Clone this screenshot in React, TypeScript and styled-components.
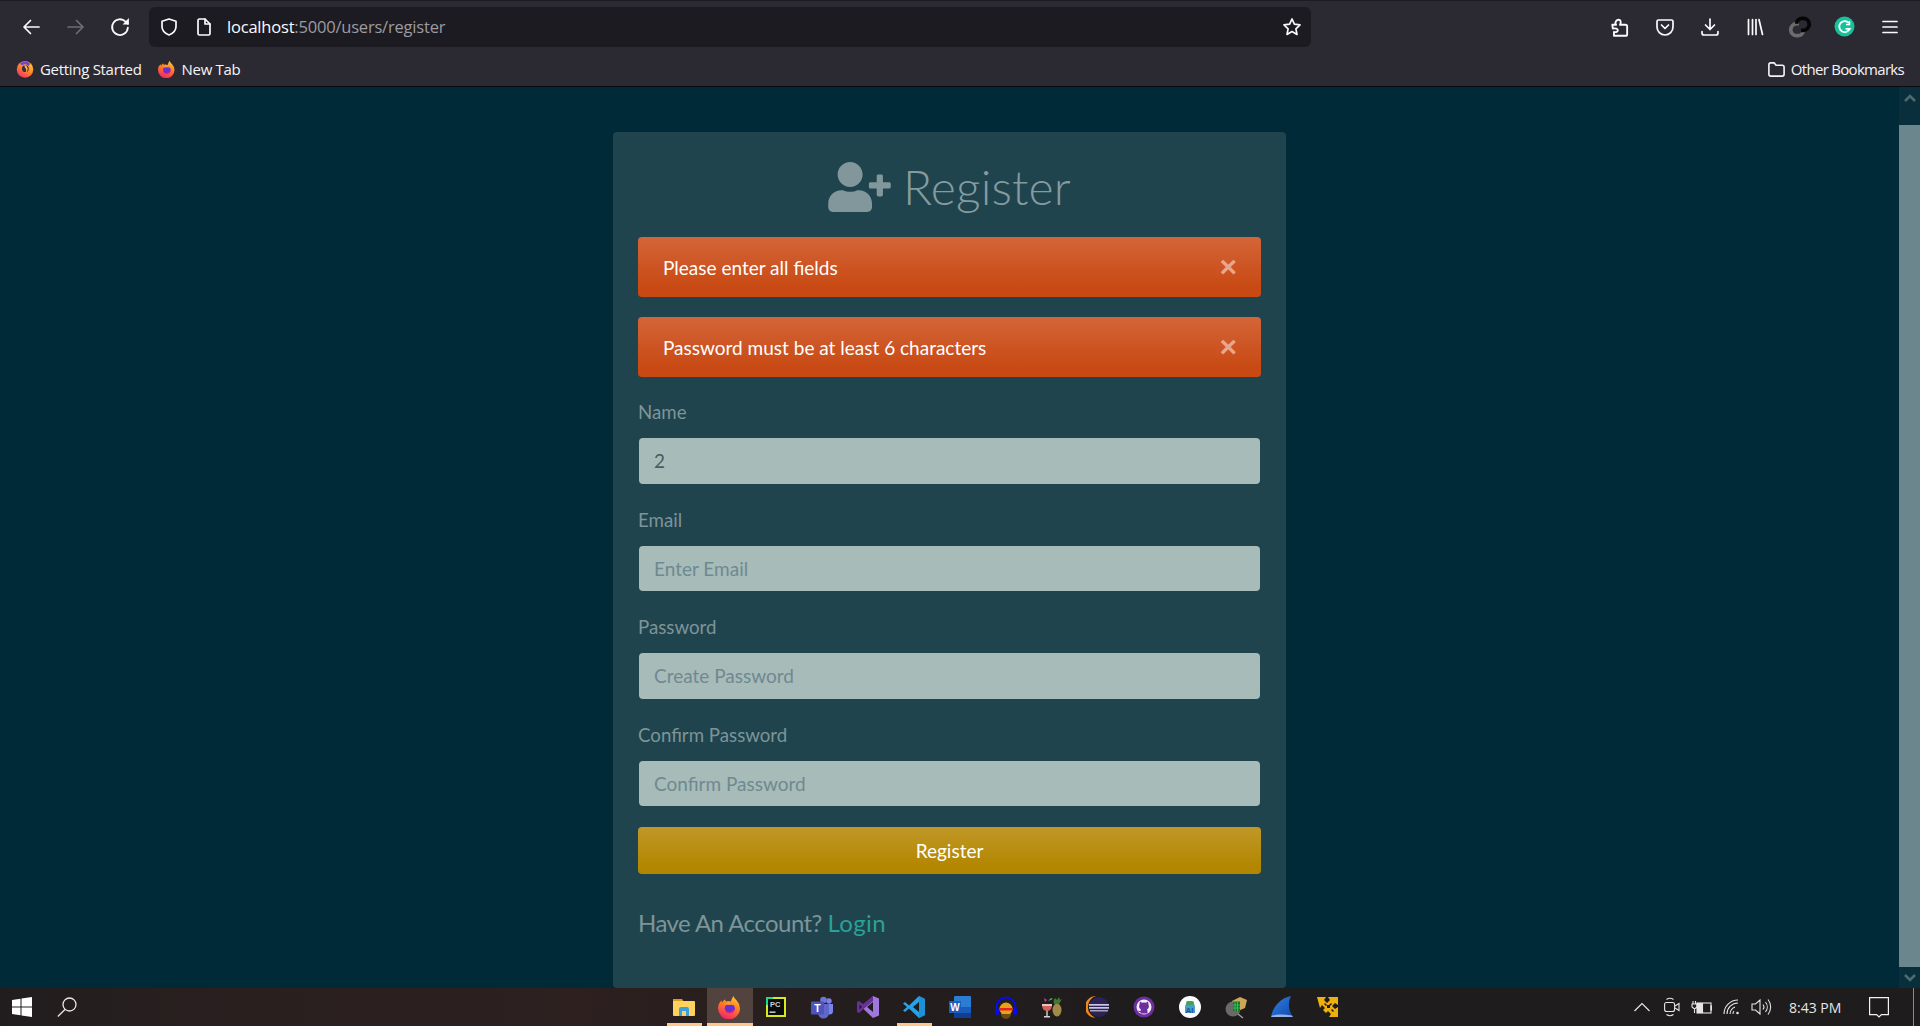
import React from "react";
import styled, { createGlobalStyle } from "styled-components";
import { FaUserPlus } from "react-icons/fa";

const GlobalStyle = createGlobalStyle`
  html, body {
    margin: 0;
    padding: 0;
    height: 100%;
    overflow: hidden;
    background: #002a38;
  }
  * {
    box-sizing: border-box;
  }
`;

const Screen = styled.div`
  display: flex;
  flex-direction: column;
  width: 1920px;
  height: 1026px;
  overflow: hidden;
`;

const BrowserChrome = styled.header`
  height: 87px;
  flex: none;
  display: flex;
  flex-direction: column;
  background: #2b2a33;
  border-top: 1px solid #1d1c22;
  border-bottom: 1px solid #0c0c0f;
  font-family: "Open Sans", sans-serif;
`;

const Toolbar = styled.div`
  height: 51px;
  flex: none;
  display: flex;
  align-items: center;
  padding: 0 8px;
`;

const ToolButton = styled.div<{ $dim?: boolean }>`
  width: 45px;
  height: 40px;
  flex: none;
  display: flex;
  align-items: center;
  justify-content: center;
  color: ${(p) => (p.$dim ? "#6d6c72" : "#fbfbfe")};
`;

const AddressBar = styled.div`
  width: 1162px;
  height: 40px;
  margin-left: 6px;
  flex: none;
  display: flex;
  align-items: center;
  padding: 0 8px 0 10px;
  gap: 15px;
  background: #1c1b22;
  border-radius: 6px;
  color: #fbfbfe;
`;

const Url = styled.div`
  font-size: 16.5px;
  letter-spacing: -0.2px;
  color: #fbfbfe;
  margin-left: -2px;

  span {
    color: #9c9ba1;
  }
`;

const Star = styled.div`
  margin-left: auto;
  display: flex;
  margin-right: 1px;
`;

const ToolGroup = styled.div`
  margin-left: auto;
  display: flex;
`;

const BookmarkBar = styled.div`
  flex: 1;
  display: flex;
  align-items: center;
  padding: 0 16px 0 16px;
  color: #f4f4f6;
  font-size: 15px;
  letter-spacing: -0.3px;
`;

const Bookmark = styled.div<{ $end?: boolean }>`
  display: flex;
  align-items: center;
  gap: 6px;
  margin-right: 16px;
  ${(p) => p.$end && "margin-left: auto; margin-right: 0; gap: 5px; letter-spacing: -0.7px;"}
`;

const PageArea = styled.div`
  flex: 1;
  min-height: 0;
  display: flex;
  background: #002a38;
`;

const Main = styled.main`
  flex: 1;
  display: flex;
  justify-content: center;
  padding-top: 45px;
  font-family: Lato, sans-serif;
`;

const Card = styled.section`
  width: 673px;
  height: 856px;
  padding: 25px 25px 0;
  background: #1f444e;
  border-radius: 4px;
`;

const Heading = styled.h1`
  margin: 0 0 16px;
  height: 64px;
  padding-bottom: 6px;
  display: flex;
  align-items: center;
  justify-content: center;
  gap: 12px;
  font-size: 48px;
  font-weight: 300;
  letter-spacing: 0.15px;
  color: #869b9f;

  svg {
    width: 63px;
    height: 50px;
    margin-top: 2px;
    color: #81979b;
  }
`;

const Alert = styled.div`
  height: 60px;
  margin-bottom: 20px;
  padding: 0 25px;
  display: flex;
  align-items: center;
  justify-content: space-between;
  color: #fff;
  font-size: 19px;
  border-radius: 4px;
  background: linear-gradient(180deg, #d46538 0%, #c84913 85%);
`;

const CloseMark = styled.span`
  font-family: "Liberation Sans", sans-serif;
  font-size: 30px;
  font-weight: 700;
  line-height: 1;
  color: #e8a78c;
  margin-right: -1px;
`;

const RegisterForm = styled.form`
  padding-top: 1px;
`;

const FormGroup = styled.div<{ $last?: boolean }>`
  margin-bottom: ${(p) => (p.$last ? "20.6px" : "22px")};
`;

const Label = styled.label`
  display: block;
  height: 30px;
  line-height: 29px;
  margin-bottom: 10px;
  color: #7d9498;
  font-size: 18.7px;
`;

const Input = styled.input`
  display: block;
  width: 621px;
  height: 45.6px;
  margin: 0 1px;
  padding: 0 15px;
  border: 0;
  border-radius: 4px;
  outline: none;
  background: #a7bbb9;
  color: #4b5a63;
  font-family: Lato, sans-serif;
  font-size: 19px;

  &::placeholder {
    color: #6f8991;
    opacity: 1;
  }
`;

const SubmitButton = styled.button`
  display: block;
  width: 100%;
  height: 47px;
  border: 0;
  border-radius: 4px;
  background: linear-gradient(180deg, #c09827 0%, #b38600 85%);
  color: #fff;
  font-family: Lato, sans-serif;
  font-size: 19px;
`;

const AccountLine = styled.p`
  margin: 28px 0 0;
  line-height: 42px;
  font-size: 24px;
  letter-spacing: -0.55px;
  color: #7d9498;

  a {
    color: #2aa198;
    text-decoration: none;
    letter-spacing: 0.4px;
  }
`;

const Scrollbar = styled.aside`
  width: 21px;
  flex: none;
  display: flex;
  flex-direction: column;
  background: #0a2f3c;
`;

const ScrollArrow = styled.div`
  height: 21px;
  flex: none;
  display: flex;
  align-items: center;
  justify-content: center;
  color: #506a72;
`;

const ScrollThumb = styled.div`
  flex: 1;
  margin: 17px 0 0;
  background: #6c868d;
`;

const Taskbar = styled.footer`
  height: 38px;
  flex: none;
  display: flex;
  background: linear-gradient(90deg, #211d1e 0%, #2a1f1f 12%, #2d201f 30%, #241d1e 45%, #1f1c1d 60%, #1e1c1d 100%);
  color: #e4e4e4;
`;

const StartZone = styled.div`
  width: 661px;
  flex: none;
  display: flex;
  align-items: center;
  padding-left: 12px;
  gap: 25px;
`;

const AppCell = styled.div<{ $active?: boolean; $running?: boolean }>`
  position: relative;
  width: 46px;
  flex: none;
  display: flex;
  align-items: center;
  justify-content: center;
  padding-bottom: 1px;
  background: ${(p) => (p.$active ? "#52433f" : "transparent")};

  &::after {
    content: "";
    display: ${(p) => (p.$running ? "block" : "none")};
    position: absolute;
    bottom: 0;
    height: 3px;
    left: ${(p) => (p.$active ? "0" : "6px")};
    right: ${(p) => (p.$active ? "0" : "5px")};
    background: #ffc68e;
  }
`;

const Tray = styled.div`
  margin-left: auto;
  display: flex;
  align-items: center;
  color: #e6e6e6;
`;

const TrayIcon = styled.div<{ $width: number }>`
  width: ${(p) => p.$width}px;
  display: flex;
  justify-content: center;
`;

const Clock = styled.div`
  width: 94px;
  padding-left: 14px;
  font-family: "Open Sans", sans-serif;
  font-size: 14px;
  white-space: nowrap;
`;

const NotifyArea = styled.div`
  width: 45px;
  height: 38px;
  display: flex;
  align-items: center;
  border-right: 1px solid #8a8a8a;
  margin-right: 6px;
`;

type IconProps = { size?: number };

const Line = ({ children, w = 20, h = 20, vb = "0 0 20 20", sw = 1.7 }: { children: React.ReactNode; w?: number; h?: number; vb?: string; sw?: number }) => (
  <svg width={w} height={h} viewBox={vb} fill="none" stroke="currentColor" strokeWidth={sw} strokeLinecap="round" strokeLinejoin="round">
    {children}
  </svg>
);

const FirefoxIcon = ({ size = 18 }: IconProps) => (
  <svg width={size} height={size} viewBox="0 0 24 24">
    <defs>
      <linearGradient id="ffBody" x1="0.7" y1="0" x2="0.3" y2="1">
        <stop offset="0" stopColor="#ffc62e" />
        <stop offset="0.45" stopColor="#ff7a26" />
        <stop offset="1" stopColor="#f0206c" />
      </linearGradient>
    </defs>
    <path d="M15.5 1c.4 2 2 3 3.4 4.7A11 11 0 1 1 3.4 5.4c0 1 .3 1.7.8 2.2.5-1.4 1.7-2.700 3.200-3.100-.2.800 0 1.500.5 2 1.500-.8 3.500-.8 5 .100.600-1.800 1.200-3.800 2.600-5.600z" fill="url(#ffBody)" />
    <circle cx="11.800" cy="13.300" r="5" fill="#6b2fd0" />
    <path d="M7 9.500c2-2.500 7-2.500 9 1-2-1-4-1-5-.500z" fill="#ff9a2c" />
    <path d="M16.800 13.500a5 5 0 0 1-9.500 2c2 2 6.500 2.200 9.500-2z" fill="#e0218a" />
  </svg>
);

const GettingStartedIcon = ({ size = 18 }: IconProps) => (
  <svg width={size} height={size} viewBox="0 0 24 24">
    <defs>
      <linearGradient id="gsBody" x1="0.8" y1="0.2" x2="0.3" y2="1">
        <stop offset="0" stopColor="#ffbd2e" />
        <stop offset="0.5" stopColor="#ff7a2a" />
        <stop offset="1" stopColor="#f5316c" />
      </linearGradient>
    </defs>
    <circle cx="12" cy="12.500" r="11" fill="url(#gsBody)" />
    <path d="M5 5a10 10 0 0 1 14 0l-2 3a7 7 0 0 0-9-1z" fill="#7b3fd8" />
    <circle cx="12.500" cy="11.500" r="4.500" fill="#3a2b45" />
    <path d="M11 6.500a5.500 5.500 0 0 1 1 10.500 5 5 0 0 0 0-7z" fill="#ffc24a" />
  </svg>
);

const FolderIcon = () => (
  <svg width="24" height="24" viewBox="0 0 24 24">
    <path d="M1 4h9l2 3H1z" fill="#d99a1f" />
    <rect x="1" y="6" width="22" height="15" rx="1" fill="#ffd25e" />
    <path d="M7 21v-7a2 2 0 0 1 2-2h6a2 2 0 0 1 2 2v7h-3v-5h-4v5z" fill="#3aa0e0" />
  </svg>
);

const PycharmIcon = () => (
  <svg width="24" height="24" viewBox="0 0 24 24">
    <rect x="2" y="2" width="20" height="20" fill="#d8e81a" />
    <path d="M2 2h7v3H5v5H2z" fill="#21d789" />
    <rect x="4" y="4" width="16" height="16" fill="#0b0d0c" />
    <text x="6" y="12" fontSize="7.500" fontWeight="700" fontFamily="Liberation Sans" fill="#cfd2cf">PC</text>
    <rect x="5.500" y="16.500" width="6" height="1.300" fill="#e8e8e8" />
  </svg>
);

const TeamsIcon = () => (
  <svg width="24" height="24" viewBox="0 0 24 24">
    <circle cx="19" cy="6" r="2.700" fill="#7b83eb" />
    <circle cx="13.500" cy="5" r="3.300" fill="#6d75d8" />
    <path d="M16 9h7v7a3.500 3.500 0 0 1-7 0z" fill="#7b83eb" />
    <path d="M8 9h11v9a5 5 0 0 1-11 0z" fill="#5f68c8" />
    <rect x="1" y="6.500" width="13" height="13" rx="1" fill="#4d55bd" />
    <text x="4.200" y="17" fontSize="10.500" fontWeight="700" fontFamily="Liberation Sans" fill="#fff">T</text>
  </svg>
);

const VisualStudioIcon = () => (
  <svg width="24" height="24" viewBox="0 0 24 24">
    <path d="M17 1l6 2.500v17L17 23 7 13.500z" fill="#a078dc" />
    <path d="M17 7l-6 5 6 5z" fill="#1e1c1d" />
    <path d="M1 7l2-1 4 3 10-8v5L7 14.500 3 18l-2-1z" fill="#68309a" />
    <path d="M3.500 9.500v5l2.500-2.500z" fill="#1e1c1d" />
  </svg>
);

const VsCodeIcon = () => (
  <svg width="24" height="24" viewBox="0 0 24 24">
    <path d="M17 1l6 3v16l-6 3-10-9.500L3 17l-2-1.500 4-3.500-4-3.500L3 7l4 3.500z" fill="#23a3ea" />
    <path d="M17 1l6 3v16l-6 3z" fill="#1f8fd6" />
    <path d="M17 7l-6 5 6 5z" fill="#1e1c1d" />
  </svg>
);

const WordIcon = () => (
  <svg width="24" height="24" viewBox="0 0 24 24">
    <rect x="6" y="1" width="17" height="22" rx="1" fill="#2b7cd3" />
    <rect x="6" y="12" width="17" height="6" fill="#185abd" />
    <rect x="6" y="18" width="17" height="5" fill="#103f91" />
    <rect x="1" y="6" width="12" height="12" fill="#1a5cc0" />
    <text x="2.300" y="15.500" fontSize="10" fontWeight="700" fontFamily="Liberation Sans" fill="#fff">W</text>
  </svg>
);

const AudacityIcon = () => (
  <svg width="24" height="24" viewBox="0 0 24 24">
    <path d="M2.500 17v-5a9.500 9.500 0 0 1 19 0v5" fill="none" stroke="#0a0af0" strokeWidth="2" />
    <rect x="1" y="13" width="4" height="7" rx="2" fill="#0a0af0" />
    <rect x="19" y="13" width="4" height="7" rx="2" fill="#0a0af0" />
    <ellipse cx="12" cy="14" rx="6.500" ry="6.500" fill="#e8a21a" />
    <rect x="5.500" y="13" width="13" height="2.500" fill="#e2261c" />
    <path d="M7 19a5 5 0 0 0 10 0z" fill="#6e4a10" />
  </svg>
);

const PortableIcon = () => (
  <svg width="24" height="24" viewBox="0 0 24 24">
    <ellipse cx="17" cy="15" rx="4.500" ry="6.500" fill="#a08a48" />
    <path d="M14 9c-1-3 0-5 1-6l2 2 2-3 1 3 2-1-3 5z" fill="#3e7a34" />
    <path d="M2 9h10c0 5-2 7-5 7s-5-2-5-7z" fill="#d0645c" />
    <rect x="2" y="9" width="10" height="2" fill="#e6c4c0" />
    <rect x="6.200" y="16" width="1.600" height="5" fill="#bcbcbc" />
    <rect x="4" y="21" width="6" height="1.500" fill="#d4d4d4" />
    <path d="M5 7l-1-4 3 2z" fill="#c63ea0" />
    <path d="M8 6l3-3 2 1z" fill="#40c060" />
  </svg>
);

const EclipseIcon = () => (
  <svg width="24" height="24" viewBox="0 0 24 24">
    <path d="M10 1a11 11 0 0 0 0 22 11.500 11.500 0 0 1 0-22z" fill="#f08a1d" />
    <circle cx="13" cy="12" r="10" fill="#2c2255" />
    <rect x="3" y="9" width="20" height="1.700" fill="#c9c6de" />
    <rect x="3" y="12" width="20" height="1.700" fill="#c9c6de" />
    <rect x="4" y="15" width="18" height="1.500" fill="#a6a2c6" />
  </svg>
);

const GithubDesktopIcon = () => (
  <svg width="24" height="24" viewBox="0 0 24 24">
    <circle cx="12" cy="12" r="10.500" fill="#6e2f9e" />
    <circle cx="12" cy="12" r="7.500" fill="#f2ecf7" />
    <path d="M8 6.500l2 1.200a7 7 0 0 1 4 0l2-1.200.5 3a4 4 0 0 1-1.500 5c.5.5.5 1 .5 2v2h-7v-1.500c-2 .3-2.500-1-3-1.700 1 .2 1.500 1 3 .700 0-.600.200-1 .500-1.500a4 4 0 0 1-1.500-5z" fill="#6e2f9e" />
  </svg>
);

const AiIcon = () => (
  <svg width="24" height="24" viewBox="0 0 24 24">
    <circle cx="12" cy="12" r="11" fill="#fbfdff" />
    <path d="M7 12a5 5 0 0 1 10 0v6H7z" fill="#4a9ec2" />
    <rect x="8" y="6" width="8" height="4" rx="2" fill="#3fa35a" />
    <text x="7.500" y="18" fontSize="8" fontWeight="700" fontFamily="Liberation Sans" fill="#1d56a8">AI</text>
  </svg>
);

const InspectIcon = () => (
  <svg width="24" height="24" viewBox="0 0 24 24">
    <circle cx="9" cy="14" r="7.500" fill="#6a6a66" />
    <path d="M14 19l5 4" stroke="#9c9c9c" strokeWidth="1.500" />
    <path d="M8 6l8-4 7 3-2 8-7 3z" fill="#c9a959" />
    <rect x="9" y="6.500" width="7" height="10" fill="#0f7a2c" />
    <path d="M11 6.500v10M13.500 6.500v10M9 10h7M9 13h7" stroke="#46d060" strokeWidth=".7" />
  </svg>
);

const WiresharkIcon = () => (
  <svg width="24" height="24" viewBox="0 0 24 24">
    <defs>
      <linearGradient id="wsFin" x1="0" y1="0" x2="1" y2="1">
        <stop offset="0" stopColor="#2f82e8" />
        <stop offset="1" stopColor="#1347a8" />
      </linearGradient>
    </defs>
    <path d="M1 22C3 11 11 3 21 1c-3 6-3 14 2 21z" fill="url(#wsFin)" />
    <path d="M1 22h22l-1-1.500C15 19 7 19 2 20.500z" fill="#d7e4f6" opacity=".65" />
  </svg>
);

const YellowArrowsIcon = () => (
  <svg width="24" height="24" viewBox="0 0 24 24" fill="#eeb00c">
    <path d="M1 2h9l-2 3 3 3 3-3-2-3h10v8l-3-2-3 3 3 3 3-2v10h-9l2-3-3-3-2 2-3-3 2-2-3-3-2 3z" />
    <path d="M11 10l3 0 0 3-3 0z" fill="#1e1c1d" />
    <path d="M9 8l2 2-1 1-2-2zM15 8l1 1-2 2-1-1zM15 15l1-1 2 2-1 1z" fill="#1e1c1d" />
  </svg>
);

const taskbarApps = [
  { key: "explorer", icon: <FolderIcon />, running: true },
  { key: "firefox", icon: <FirefoxIcon size={24} />, running: true, active: true },
  { key: "pycharm", icon: <PycharmIcon /> },
  { key: "teams", icon: <TeamsIcon /> },
  { key: "vs", icon: <VisualStudioIcon /> },
  { key: "vscode", icon: <VsCodeIcon />, running: true },
  { key: "word", icon: <WordIcon /> },
  { key: "audacity", icon: <AudacityIcon /> },
  { key: "portable", icon: <PortableIcon /> },
  { key: "eclipse", icon: <EclipseIcon /> },
  { key: "github", icon: <GithubDesktopIcon /> },
  { key: "ai", icon: <AiIcon /> },
  { key: "inspect", icon: <InspectIcon /> },
  { key: "wireshark", icon: <WiresharkIcon /> },
  { key: "yellow", icon: <YellowArrowsIcon /> },
];

const fields = [
  { label: "Name", placeholder: "Enter Name", value: "2" },
  { label: "Email", placeholder: "Enter Email" },
  { label: "Password", placeholder: "Create Password" },
  { label: "Confirm Password", placeholder: "Confirm Password" },
];

export default function App() {
  return (
    <Screen>
      <GlobalStyle />
      <BrowserChrome>
        <Toolbar>
          <ToolButton>
            <Line><path d="M18 10H3.500M9.500 3.500L3 10l6.500 6.500" /></Line>
          </ToolButton>
          <ToolButton $dim>
            <Line><path d="M2 10h14.500M10.500 3.500L17 10l-6.500 6.500" /></Line>
          </ToolButton>
          <ToolButton>
            <Line w={21} h={21}>
              <path d="M17 11a7.500 7.500 0 1 1-2.200-5.700L17 7.500" />
              <path d="M18 2v6h-6" fill="currentColor" stroke="none" />
            </Line>
          </ToolButton>
          <AddressBar>
            <Line>
              <path d="M10 2l7 2.200v5.300c0 4-3 6.900-7 8.500-4-1.600-7-4.500-7-8.500V4.200z" />
            </Line>
            <Line>
              <path d="M4 3.500A1.500 1.500 0 0 1 5.500 2h5.500l5 5v9.500a1.500 1.500 0 0 1-1.500 1.500h-9A1.500 1.500 0 0 1 4 16.500z" />
              <path d="M11 2v5h5" />
            </Line>
            <Url>
              localhost<span>:5000/users/register</span>
            </Url>
            <Star>
              <Line>
                <path d="M10 2l2.400 5.200 5.600.7-4.100 3.900 1.100 5.600-5-2.800-5 2.800 1.100-5.600L2 7.900l5.600-.7z" />
              </Line>
            </Star>
          </AddressBar>
          <ToolGroup>
            <ToolButton>
              <Line w={22} h={22}>
                <path d="M3 8h3.500c-1-1-1-2 0-3.500C7.500 3 10 3 10.500 4.500c.4 1.200 0 2.500-.5 3.500H15a1.500 1.500 0 0 1 1.500 1.500v7A1.500 1.500 0 0 1 15 18H4.500v-3.500c2 .5 3.500 0 3.500-1.500s-2-2-4.500-1.500z" />
              </Line>
            </ToolButton>
            <ToolButton>
              <Line>
                <path d="M3.500 3h13A1.500 1.500 0 0 1 18 4.500V10a8 8 0 0 1-16 0V4.500A1.500 1.500 0 0 1 3.500 3z" />
                <path d="M6.500 8L10 11.500 13.500 8" />
              </Line>
            </ToolButton>
            <ToolButton>
              <Line>
                <path d="M10 2v10.500M5.500 8l4.500 4.500L14.500 8M2 14.500V16a2 2 0 0 0 2 2h12a2 2 0 0 0 2-2v-1.500" />
              </Line>
            </ToolButton>
            <ToolButton>
              <Line>
                <path d="M3.500 2.500v15M7.500 2.500v15M11 2.500v15M14 2.500l3.500 15" />
              </Line>
            </ToolButton>
            <ToolButton>
              <svg width="24" height="24" viewBox="0 0 22 22" fill="none" strokeWidth="3.400">
                <path d="M14 14a5 5 0 0 1-5 5H8a5 5 0 0 1 0-11h2" stroke="#6c6c6f" />
                <path d="M8 8a5 5 0 0 1 5-5h1a5 5 0 0 1 0 11h-2" stroke="#050505" />
              </svg>
            </ToolButton>
            <ToolButton>
              <svg width="21" height="21" viewBox="0 0 21 21">
                <circle cx="10.500" cy="10.500" r="10" fill="#15c39a" />
                <path d="M15 7a5.500 5.500 0 1 0 .8 5.800h-4.300" fill="none" stroke="#fff" strokeWidth="1.800" />
                <path d="M15.500 5v3.500H12" fill="none" stroke="#fff" strokeWidth="1.500" />
              </svg>
            </ToolButton>
            <ToolButton>
              <Line>
                <path d="M3 4.500h14M3 10h14M3 15.500h14" />
              </Line>
            </ToolButton>
          </ToolGroup>
        </Toolbar>
        <BookmarkBar>
          <Bookmark>
            <GettingStartedIcon />
            Getting Started
          </Bookmark>
          <Bookmark>
            <FirefoxIcon />
            New Tab
          </Bookmark>
          <Bookmark $end>
            <Line w={19} h={19}>
              <path d="M2 5a2 2 0 0 1 2-2h3.500l2 2.500H16a2 2 0 0 1 2 2V15a2 2 0 0 1-2 2H4a2 2 0 0 1-2-2z" />
            </Line>
            Other Bookmarks
          </Bookmark>
        </BookmarkBar>
      </BrowserChrome>

      <PageArea>
        <Main>
          <Card>
            <Heading>
              <FaUserPlus />
              Register
            </Heading>
            <Alert>
              Please enter all fields
              <CloseMark>×</CloseMark>
            </Alert>
            <Alert>
              Password must be at least 6 characters
              <CloseMark>×</CloseMark>
            </Alert>
            <RegisterForm>
              {fields.map((field, i) => (
                <FormGroup key={field.label} $last={i === fields.length - 1}>
                  <Label>{field.label}</Label>
                  <Input placeholder={field.placeholder} defaultValue={field.value} />
                </FormGroup>
              ))}
              <SubmitButton type="button">Register</SubmitButton>
            </RegisterForm>
            <AccountLine>
              Have An Account? <a href="#login">Login</a>
            </AccountLine>
          </Card>
        </Main>
        <Scrollbar>
          <ScrollArrow>
            <svg width="12" height="8" viewBox="0 0 12 8" fill="none" stroke="currentColor" strokeWidth="2.500"><path d="M1 7l5-5 5 5" /></svg>
          </ScrollArrow>
          <ScrollThumb />
          <ScrollArrow>
            <svg width="12" height="8" viewBox="0 0 12 8" fill="none" stroke="currentColor" strokeWidth="2.500"><path d="M1 1l5 5 5-5" /></svg>
          </ScrollArrow>
        </Scrollbar>
      </PageArea>

      <Taskbar>
        <StartZone>
          <svg width="20" height="20" viewBox="0 0 20 20" fill="#fff">
            <path d="M0 3l8.500-1.200V9.500H0zM9.500 1.600L20 0v9.500H9.500zM0 10.500h8.500v7.700L0 17zM9.500 10.500H20V20L9.500 18.400z" />
          </svg>
          <svg width="20" height="20" viewBox="0 0 20 20" fill="none" stroke="#e8e8e8" strokeWidth="1.300">
            <circle cx="12.500" cy="7.500" r="6.500" />
            <path d="M8 12.500L.8 19.500" />
          </svg>
        </StartZone>
        {taskbarApps.map((app) => (
          <AppCell key={app.key} $active={app.active} $running={app.running}>
            {app.icon}
          </AppCell>
        ))}
        <Tray>
          <TrayIcon $width={30}>
            <svg width="16" height="10" viewBox="0 0 16 10" fill="none" stroke="currentColor" strokeWidth="1.200"><path d="M.5 9L8 1.500 15.500 9" /></svg>
          </TrayIcon>
          <TrayIcon $width={30}>
            <svg width="16" height="20" viewBox="0 0 16 20" fill="none" stroke="currentColor" strokeWidth="1.100">
              <rect x=".6" y="5.500" width="10" height="9" rx="2" />
              <path d="M11 9l4-2.500v7L11 11M2.500 2.500a6 6 0 0 1 7 0M2.500 17.500a6 6 0 0 0 7 0" />
            </svg>
          </TrayIcon>
          <TrayIcon $width={28}>
            <svg width="21" height="15" viewBox="0 0 21 15" fill="none" stroke="currentColor" strokeWidth="1.100">
              <rect x="6" y="3" width="14" height="10" />
              <rect x="20" y="6" width="1" height="4" fill="currentColor" />
              <rect x="6.500" y="3.500" width="5" height="9" fill="currentColor" />
              <path d="M2 1v3M4.500 1v3M1 4h5v3l-2.500 2L1 7zM3.500 9v4" />
            </svg>
          </TrayIcon>
          <TrayIcon $width={32}>
            <svg width="17" height="16" viewBox="0 0 17 16" fill="none" stroke="currentColor" strokeWidth="1.100">
              <path d="M1 15A14 14 0 0 1 15 1M4 15A11 11 0 0 1 15 4M7 15a8 8 0 0 1 5-7M10 15a4 4 0 0 1 1-3" />
              <circle cx="14.500" cy="14" r="1.300" fill="currentColor" stroke="none" />
            </svg>
          </TrayIcon>
          <TrayIcon $width={28}>
            <svg width="21" height="18" viewBox="0 0 21 18" fill="none" stroke="currentColor" strokeWidth="1.100">
              <path d="M1 6h3.500L9 2v14l-4.500-4H1zM12 6.500a4 4 0 0 1 0 5M14.500 4a8 8 0 0 1 0 10M17 1.500a12 12 0 0 1 0 15" />
            </svg>
          </TrayIcon>
          <Clock>8:43 PM</Clock>
          <NotifyArea>
            <svg width="20" height="21" viewBox="0 0 20 21" fill="none" stroke="#f2f2f2" strokeWidth="1.200">
              <path d="M.6.600h18.800v17h-7L10 20l-2.400-2.400h-7z" />
            </svg>
          </NotifyArea>
        </Tray>
      </Taskbar>
    </Screen>
  );
}
